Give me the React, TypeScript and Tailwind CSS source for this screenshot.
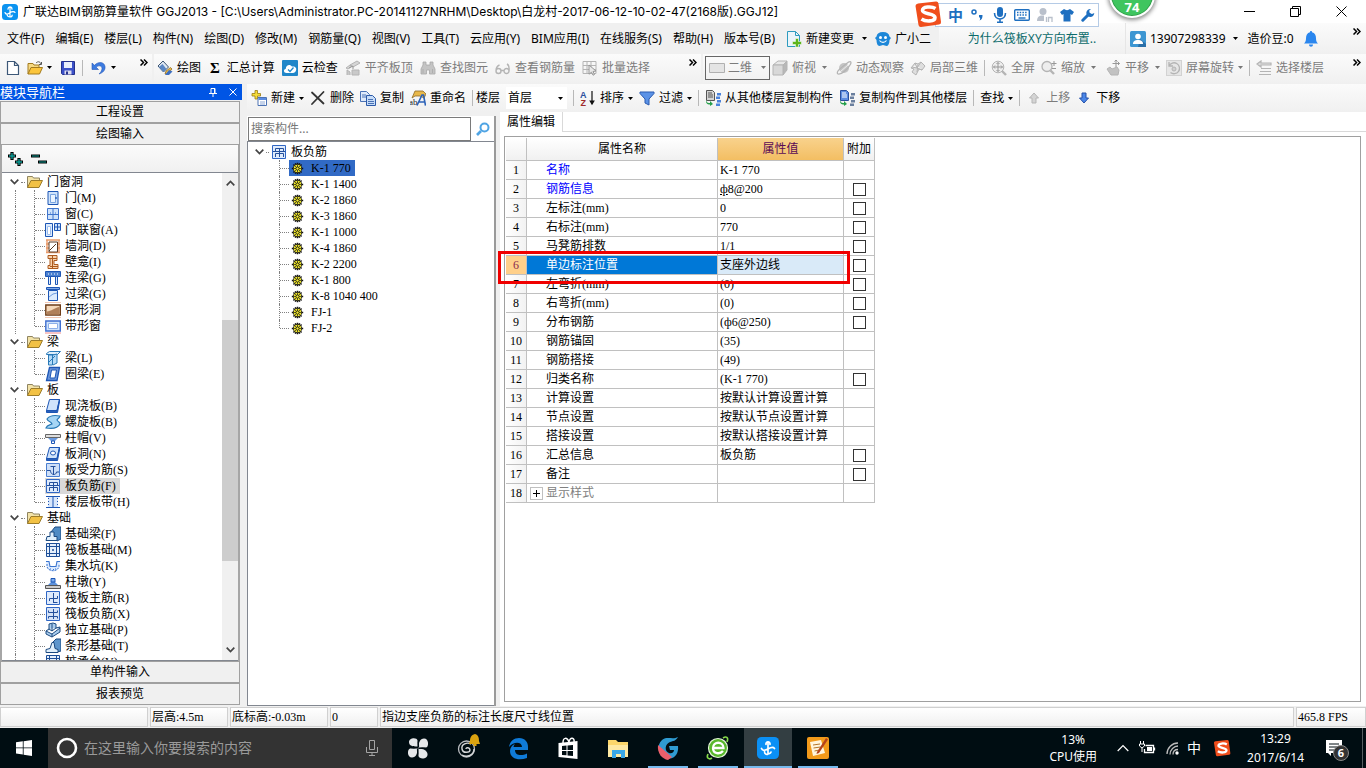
import React from "react";

type IconProps = { name: string; size?: number };

const B = "#1d56b5";
const L = "#cfe3fb";
const G = "#b4b4b4";
const D = "#979797";

const drawings: Record<string, React.ReactNode> = {
  app: (
    <>
      <rect width="16" height="16" rx="3.5" fill="#0b93f0" />
      <path d="M8 3v10M3 8.500c.5 2 3 2 5 .3s4.500-1.500 5-.3M5 10.500c.3 1.700 1.500 2.500 3 2.500s2.200-.8 2.200-2M6 5.200c0-3 4-3 4 0" fill="none" stroke="#fff" strokeWidth="1.200" strokeLinecap="round" />
    </>
  ),
  newFile: (
    <path d="M2.500 1.500h7l4 4v9h-11z M9.500 1.500v4h4" fill="#fff" stroke="#3d5878" strokeWidth="1.200" />
  ),
  open: (
    <>
      <path d="M1 14V3.500h5l1 1.500h5v3" fill="#f6d982" stroke="#a27a1e" />
      <path d="M1 14l3-6.500h11.500L12.500 14z" fill="#fbc53c" stroke="#a27a1e" />
      <path d="M9 3c2-2 4-1.500 5 1m.5-2v2.500H12" fill="none" stroke="#555" />
    </>
  ),
  save: (
    <>
      <path d="M1.500 1.500h13v13h-12l-1-1z" fill="#3b50c8" stroke="#24318c" />
      <path d="M4 2h8v6H4z" fill="#e9eefb" />
      <path d="M4.500 10.500h7v4h-7z" fill="#dde" />
      <path d="M6 11.500h2v3H6z" fill="#24318c" />
    </>
  ),
  undo: (
    <path d="M1 3v6.500h6.500L5.300 7.300C7.500 4.800 11 5.600 11 8.500c0 2-1.200 3.800-3 5.500 4-1.200 6.500-4 6-7.500C13.300 2 7.500 1 3.500 5.300z" fill="#3c7be0" stroke="#2557b8" strokeWidth=".6" />
  ),
  bucket: (
    <>
      <path d="M1 6l5-5 5.500 6-5 5z" fill="#dfe8f2" stroke="#3b5472" />
      <path d="M2 7l4.500 5 3-3-4-5z" fill="#5b87c4" />
      <path d="M8 14l1-3 4.500-3.500 1.500 1.500L11 13.500z" fill="#e5b64a" stroke="#8b6414" strokeWidth=".7" />
      <path d="M12 10l3.500 1.500L12 15H8z" fill="#3c6fc2" />
    </>
  ),
  cloud: (
    <>
      <rect width="16" height="16" rx="1" fill="#1f86c9" />
      <path d="M4.500 13C1.500 13 1 9.500 3.800 8.800 3.800 5 8 3.500 10 6.500c3-.6 5 1.500 4 4-.4 1.600-1.600 2.500-3 2.500z" fill="#fff" />
      <path d="M6 9.500l2 2 3.500-4" fill="none" stroke="#1f86c9" strokeWidth="1.300" />
    </>
  ),
  align: (
    <>
      <path d="M5 5l7-4 3 2-7 4zM1 8l4-3 2 1-4 3z" fill="#d6d6d6" stroke={G} />
      <path d="M2 15V10l3 2v3M7 15v-5h7v5z" fill="#c9c9c9" stroke={G} />
      <path d="M4 8l4-2v3" fill="none" stroke={D} />
    </>
  ),
  binoc: (
    <path d="M3 2h3v3h4V2h3v3l2 4v5H9.500v-4h-3v4H1V9l2-4z M3 9v4 M12.500 9v4" fill="#c4c4c4" stroke="#a8a8a8" strokeWidth=".8" />
  ),
  glasses: (
    <path d="M1 11a2.500 2.500 0 1 0 5 0a2.500 2.500 0 1 0-5 0c0-3 1-5 3.500-6M9 11a2.500 2.500 0 1 0 5 0a2.500 2.500 0 1 0-5 0M6 10.500h3M14 11c.5-4 0-6-2-7" fill="none" stroke={G} strokeWidth="1.400" />
  ),
  batch: (
    <>
      <path d="M1 1.500h13v12H1zM1 5.500h13M1 9.500h13M5 1.500v12M9 1.500v12" fill="none" stroke={G} />
      <path d="M7 5l7 6-3 .5 1.500 3-1.500.7-1.500-3-2.500 2z" fill="#e8e8e8" stroke={D} />
    </>
  ),
  rect: <path d="M.5 3.500h15v9H.5z" fill="#e4e4e4" stroke="#b0b0b0" />,
  cube: (
    <>
      <path d="M1 5l5-4h9l-4 4z" fill="#e8e8e8" stroke={G} />
      <path d="M11 5l4-4v9l-4 5z" fill="#b8b8b8" stroke={G} />
      <path d="M1 5h10v10H1z" fill="#d8d8d8" stroke={G} />
    </>
  ),
  orbit: (
    <>
      <circle cx="8" cy="8" r="5" fill="#c4c4c4" />
      <path d="M2 14C-1 12 6 7 10 4c5-4 6-2 4 1-2 4-9 10-12 9z" fill="none" stroke={G} strokeWidth="1.300" />
      <path d="M4 12l8-7" stroke="#eee" />
    </>
  ),
  local3d: (
    <path d="M1 8l4-5 3 1 3-2 4 4-3 4-3-1-3 6-4-3 2-3zM5 3l2 5 5 2M8 4l-1 8M2 7l5 1 4-6" fill="#dedede" stroke={G} />
  ),
  full: (
    <>
      <circle cx="7" cy="7" r="5.800" fill="#eee" stroke={G} />
      <path d="M7 2.500v9M2.500 7h9M5.500 4L7 2.500 8.500 4M5.500 10L7 11.500 8.500 10M4 5.500L2.500 7 4 8.500M10 5.500L11.500 7 10 8.500" fill="none" stroke={D} />
      <path d="M11 11l4 4" stroke={G} strokeWidth="2.400" />
    </>
  ),
  zoom: (
    <>
      <circle cx="6" cy="6.500" r="5" fill="#eee" stroke={G} strokeWidth="1.300" />
      <path d="M9.500 10.500L13 14" stroke={G} strokeWidth="2.400" />
      <path d="M13 1v5M10.500 3.500h5M11 8.500h4" stroke={D} />
    </>
  ),
  pan: (
    <>
      <path d="M2 9l3-2 2 2 5-2 2 3-1 5H6z" fill="#c2c2c2" stroke={G} />
      <path d="M11 0v7M7.500 3.500h7M9.500 1.500L11 0l1.500 1.500M13 2l1.500 1.500L13 5" fill="none" stroke={D} />
    </>
  ),
  rotate: (
    <>
      <rect x=".5" y=".5" width="15" height="15" fill="#e6e6e6" stroke="#d2d2d2" />
      <path d="M3 6A5.500 5.500 0 1 1 4.500 12.500M3 2v4h4" fill="none" stroke={G} strokeWidth="1.300" />
      <circle cx="8" cy="9" r="2" fill="#d0d0d0" stroke={G} />
    </>
  ),
  floors: (
    <path d="M1 4l4-3v2h10v2H5v2zM5 8.500h10M4 11.500h11M3 14.500h12" fill="#ddd" stroke={G} strokeWidth="1.200" />
  ),
  create: (
    <>
      <path d="M4 .5h2.500v3h3V6h-3v3H4V6H1V3.500h3z" fill="#f5dc3a" stroke="#9a7b10" strokeWidth=".8" />
      <path d="M7 7.500h8.500v8H7z" fill="#fff" stroke="#4c73b4" />
      <path d="M7.500 8h7.500v2H7.500z" fill="#5b8be0" />
      <path d="M9 12h5M9 14h5" stroke="#8ba6d4" />
    </>
  ),
  cross: (
    <path d="M2 2.500l11.500 11M13.500 2L2 14" stroke="#333" strokeWidth="1.800" strokeLinecap="round" />
  ),
  copy: (
    <>
      <path d="M.5 1.500h6l3 3v7h-9z" fill="#dfeafa" stroke="#4a72b5" />
      <path d="M6.500 5.500h6l3 3v7h-9z" fill="#c6dcf8" stroke="#2c5aa8" />
      <path d="M2 5h4M2 7h4M8 9.500h5M8 11.500h6M8 13.500h6" stroke="#4a72b5" />
    </>
  ),
  rename: (
    <>
      <path d="M5 1h8l3 3-2 4-4-2H5L2 8z" fill="#e8b84a" stroke="#8d6a28" strokeWidth=".8" />
      <text x="-1" y="15" fontSize="9" fontFamily="Liberation Serif" fill="#222">ab</text>
      <path d="M7 15.500L12 5h1.500l2 10.500M9 12h6" fill="none" stroke="#2c62b8" strokeWidth="1.600" />
    </>
  ),
  az: (
    <>
      <text x="0" y="7.500" fontSize="9" fontWeight="700" fontFamily="Liberation Sans" fill="#2b4f9e">A</text>
      <text x="0.500" y="15.500" fontSize="9" fontWeight="700" fontFamily="Liberation Sans" fill="#a02a2a">Z</text>
      <path d="M12 1v12M10.200 11L12 14l1.800-3z" fill="#111" stroke="#111" strokeWidth="1.200" />
    </>
  ),
  filter: (
    <path d="M1 2h14v1.500L10 9v6l-4-2V9L1 3.500z" fill="#5b92e6" stroke="#2a5bb0" />
  ),
  copyFrom: (
    <>
      <path d="M1.500.500h6l2 2v8h-8z" fill="#d4d4d4" stroke="#555" />
      <path d="M3 3h4M3 5h5M3 7h5" stroke="#555" />
      <path d="M1 10c1 3 2 3 4 3v-2l3 3-3 2v-1.500c-3 0-4-1-4-4.500z" fill="#24a04a" />
      <path d="M12 3h4v2.500h-4zM11 6.500h4V9h-4zM12 10h4v2.500h-4zM11 13.500h4V16h-4z" fill="#4b83dc" />
    </>
  ),
  copyTo: (
    <>
      <path d="M1.500.500h6l2 2v8h-8z" fill="#5d8ce0" stroke="#2a4f9c" />
      <path d="M3 3h4M3 5h5M3 7h5" stroke="#fff" />
      <path d="M1 10c1 3 2 3 4 3v-2l3 3-3 2v-1.500c-3 0-4-1-4-4.500z" fill="#24a04a" />
      <path d="M12 3h4v2.500h-4zM11 6.500h4V9h-4zM12 10h4v2.500h-4zM11 13.500h4V16h-4z" fill="#6a7f9e" />
    </>
  ),
  up: <path d="M8 3l4.500 5H10v5H6V8H3.500z" fill="#d4d4d4" stroke="#b5b5b5" />,
  down: <path d="M8 13l4.500-5H10V3H6v5H3.500z" fill="#4a86e8" stroke="#2450a8" />,
  changeDoc: (
    <>
      <path d="M1.500.500h8l4 4v11h-12z" fill="#eaf5fb" stroke="#2d9bbf" />
      <path d="M9.500.500v4h4" fill="none" stroke="#2d9bbf" />
      <path d="M9.500 7.500h3v3h3v3h-3v2.500h-3v-2.500h-3v-3h3z" fill="#5cb51c" stroke="#fff" strokeWidth=".5" />
    </>
  ),
  mascot: (
    <>
      <path d="M8 1c4 0 6 1.500 6.500 4.500L16 7l-1.500 2c0 4-1.500 6-3 6L8 14l-3.500 1c-2 0-3-3-3-6L0 7l1.500-1.500C2 2.500 4 1 8 1z" fill="#1d87d8" />
      <circle cx="5.500" cy="6.500" r="1.500" fill="#fff" />
      <circle cx="10.500" cy="6.500" r="1.500" fill="#fff" />
      <path d="M4.500 9.500c2 2.500 5 2.500 7 0" fill="none" stroke="#fff" strokeWidth="1.200" />
    </>
  ),
  user: (
    <>
      <rect width="16" height="16" rx="1.500" fill="#3d96d2" />
      <path d="M10 8l6 5v3H8z" fill="#2a6fa8" />
      <circle cx="8" cy="5.500" r="2.800" fill="#fff" />
      <path d="M3 13c0-3 2-4 5-4s5 1 5 4z" fill="#fff" />
    </>
  ),
  bell: (
    <path d="M8 0c.8 0 1 .5 1 1.200 3 .8 4 3 4 6 0 2.500.5 4 2 5.300H1c1.500-1.300 2-2.800 2-5.300 0-3 1-5.200 4-6C7 .500 7.200 0 8 0zM6 13.500h4c0 3-4 3-4 0z" fill="#2a86ee" />
  ),
  folder: (
    <>
      <path d="M.5 13.500v-11h5l1 1.500h6v3" fill="#f3e3a8" stroke="#8f8460" />
      <path d="M.5 13.500L4 6.500h11.500l-3.500 7z" fill="#f2c144" stroke="#9c7c2a" />
    </>
  ),
  search: (
    <>
      <circle cx="9.500" cy="6.500" r="4" fill="none" stroke="#4fa4e4" strokeWidth="2" />
      <path d="M6 10l-4 4" stroke="#4fa4e4" strokeWidth="2.600" />
    </>
  ),
  gear: (
    <>
      <path d="M8 1v14M1 8h14M3 3l10 10M13 3L3 13M5.300 1.500l5.400 13M10.700 1.500l-5.400 13" stroke="#111" strokeWidth="1.800" />
      <circle cx="8" cy="8" r="5.200" fill="#f5ec2a" stroke="#111" strokeWidth="1" />
      <path d="M8 3v10M3 8h10M4.500 4.500l7 7M11.500 4.500l-7 7" stroke="#222" strokeWidth=".9" />
      <circle cx="8" cy="8" r="2" fill="#f5ec2a" stroke="#111" />
    </>
  ),
  door: (
    <>
      <path d="M3 1.500h10v13H3z" fill={L} stroke={B} />
      <path d="M5.500 4.500h5v8h-5z" fill="#e9f3ff" stroke="#7aa5e0" />
      <path d="M11 7v2" stroke={B} strokeWidth="1.300" />
    </>
  ),
  window: (
    <path d="M2.500 2.500h11v11h-11zM8 2.500v11M2.500 8.500h11M5 7h1M10 7h1" fill={L} stroke="#3f74cc" />
  ),
  doorWindow: (
    <>
      <path d="M.5 1.500h7v13h-7z" fill="#dcebfd" stroke={B} />
      <path d="M2.500 4.500h3v8h-3z" fill="#fff" stroke="#9bbcec" />
      <path d="M9.500 1.500h6v7h-6zM12.500 1.500v7M9.500 5h6" fill={L} stroke={B} />
    </>
  ),
  wallHole: (
    <>
      <path d="M1 2h14M1 6h14M1 10h14M1 14.500h14M2 2v12M14 2v12" stroke="#e89a6a" strokeWidth="1.400" />
      <path d="M4 4h8.500v10H4z" fill="#fff" stroke="#5b3a24" />
      <path d="M4 13l7-7" stroke="#5b3a24" />
    </>
  ),
  niche: (
    <path d="M3 1.500h9v5h-3v4h4v4H3v-3h2v-7H3zM5 4.500h7M5 12.500h8M7.500 2v12" fill="#f8d2ac" stroke="#ad5a1e" />
  ),
  linkBeam: (
    <>
      <path d="M.5 1.500h15v5H.5z" fill="#4a80d0" stroke={B} />
      <path d="M3 4h1M6 4h1M9 4h1M12 4h1" stroke="#fff" />
      <path d="M3.500 6.500h2v8h-2zM10.500 6.500h2v8h-2z" fill="#e2eefd" stroke={B} />
    </>
  ),
  lintel: (
    <>
      <path d="M1.500 1.500h13v2h-13z" fill="#7ea8e6" stroke={B} />
      <path d="M3.500 4.500h9v10h-9z" fill="#dcebfd" stroke={B} />
      <path d="M4 11l4-3 4-1" fill="none" stroke="#6d9be0" />
    </>
  ),
  stripHole: (
    <>
      <path d="M.8 3h14.500v10H.8z" fill="#f5d9bb" stroke="#6e3d18" strokeWidth="1.400" />
      <path d="M1.500 9.500c5 0 8-4 13-4.500v7.500h-13z" fill="#b0805a" />
      <path d="M0 .500h16M0 15.500h16" stroke="#f3c8b4" />
    </>
  ),
  stripWindow: (
    <>
      <path d="M.8 3h14.500v10H.8z" fill={L} stroke="#3f6fd0" strokeWidth="1.400" />
      <path d="M3.500 5.500h9v5h-9z" fill="#fff" stroke="#8db0ea" />
      <path d="M0 15h16" stroke="#f08a8a" />
    </>
  ),
  beam: (
    <>
      <path d="M1.500 3.500l3-2h11l-3 3h-11z" fill="#dff0fd" stroke="#2a7ab8" />
      <path d="M3.500 5h4v10h-4zM8 5l4-1v9l-4 2" fill="#b4dbf8" stroke="#2a7ab8" />
      <path d="M4 12l6-6" stroke="#2a7ab8" />
    </>
  ),
  ringBeam: (
    <>
      <path d="M4.500 1.500h10l-2.500 13H1.500z" fill="#6c97dc" stroke={B} strokeWidth="1.300" />
      <path d="M6.500 4h5l-1.500 8H5z" fill="#fff" stroke={B} />
    </>
  ),
  slab: (
    <>
      <path d="M4.500 1.500h10l-2.500 11H1.500z" fill={L} stroke={B} />
      <path d="M1.500 12.500h10.500l2.500-11v2l-2 11H1.500z" fill="#2a60b8" stroke={B} />
    </>
  ),
  spiral: (
    <path d="M2 5c3-4 8-4 13-3-1 3-3 3-3 4 2 3 3 2 3 4-2 4-8 5-14 4 1-3 4-3 6-4-1-3-4-2-5-5z" fill="#a6d6f5" stroke="#2778b5" strokeWidth="1.200" />
  ),
  cap: (
    <>
      <path d="M.5 4.500h15v3H.5z" fill="#ddd" stroke="#666" />
      <path d="M3 8h10l-3 3H6z" fill="#6c9be0" />
      <path d="M6.500 11h3v2.500h-3z" fill="#fff" stroke={B} />
    </>
  ),
  slabHole: (
    <>
      <path d="M4.500 1.500h10l-2.500 11H1.500z" fill={L} stroke={B} />
      <path d="M1.500 12.500h10.500l2.500-11v2l-2 11H1.500z" fill="#2a60b8" stroke={B} />
      <ellipse cx="8" cy="7" rx="2.500" ry="2" fill="#fff" stroke={B} />
    </>
  ),
  stress: (
    <>
      <path d="M1.500 1.500h13v13h-13z" fill="#cfe0f8" stroke="#4a7ed0" />
      <path d="M8.500 4v9M5.500 4.500h5M2 8.500h3.500c0 5 6 5 6 1.500H14" fill="none" stroke="#24509c" />
    </>
  ),
  negative: (
    <>
      <path d="M1.500 1.500h13v13h-13z" fill="#dfebfc" stroke="#2f66c4" />
      <path d="M4.500 7V4.500h8V7M4.500 13V9.500h8V13M8.500 4v9M2 7.500h12" fill="none" stroke="#24509c" />
    </>
  ),
  band: (
    <>
      <path d="M3 3h10v10H3z" fill="#d8e6fb" />
      <path d="M1 2.500h14M1 13.500h14M8 3v10" stroke={B} />
      <path d="M3.500 4v8M12.500 4v8" stroke={B} strokeDasharray="1 2" />
    </>
  ),
  footBeam: (
    <>
      <path d="M6 6l4-5h6v12l-4 2z" fill="#4f8bc4" stroke="#1c4a80" />
      <path d="M1 14.500l1-4h3V6l4 0v4.500h3v4z" fill="#e1f0fc" stroke="#1c4a80" />
    </>
  ),
  raft: (
    <path d="M1.500 1.500h13v13h-13zM4.500 1v14M11.500 1v14M1 4.500h14M1 11.500h14M7.500 7.500h1v1h-1z" fill="#e6f0fc" stroke="#1e4f98" />
  ),
  pit: (
    <>
      <path d="M1 3h3l1 6h6l1-6h3l-1 7c-2 4-10 4-12 0z" fill="#dcebff" />
      <path d="M1 3.500h3l1 5h6l1-5h3" fill="none" stroke="#3a74cf" strokeWidth="1.100" />
      <path d="M2 6v3c2 5 10 5 12 0V6M5 11h1M8 11.500h1M10 11h1" fill="none" stroke="#3a74cf" strokeDasharray="2 1" />
    </>
  ),
  pier: (
    <>
      <path d="M.5 11.500h15v3H.5z" fill="#ccc" stroke="#555" />
      <path d="M3 11l3-3h4l3 3z" fill="#5d92dc" />
      <path d="M6 4.500h4V8H6z" fill="#7cadf0" stroke={B} />
    </>
  ),
  raftMain: (
    <>
      <path d="M1.500 1.500h13v13h-13z" fill="#dfebfc" stroke="#2f66c4" />
      <path d="M8.500 3v10M4.500 11V8.500h8V6M8.500 12.500h4" fill="none" stroke="#24509c" />
    </>
  ),
  raftNeg: (
    <>
      <path d="M1.500 1.500h13v13h-13z" fill="#d5e3f8" stroke="#2f66c4" />
      <path d="M3.500 4.500v2h9v-2M3.500 12.500v-2h9v2M8.500 3v10" fill="none" stroke="#24509c" />
    </>
  ),
  isolated: (
    <path d="M1 9l3-2V2l4-1 3 1v4l4-1v5l-8 5-6-3zM1 9l6 3 8-6M7 12v3M4 7l3 2 4-3M7 9V2" fill="#a9cdee" stroke="#1c4a80" />
  ),
  strip: (
    <>
      <path d="M7 5l4-4h5v12l-4 1z" fill="#5d95cc" stroke="#1c4a80" />
      <path d="M1 14.500v-3l4-1 2-6h2l1 6 3 1v3z" fill="#e1f0fc" stroke="#1c4a80" />
    </>
  ),
};

function Icon({ name, size = 16 }: IconProps) {
  return (
    <svg width={size} height={size} viewBox="0 0 16 16" className="shrink-0" aria-hidden="true">
      {drawings[name]}
    </svg>
  );
}

function Caret({ dim }: { dim?: boolean }) {
  return (
    <svg width="5" height="3" viewBox="0 0 5 3" className="shrink-0" aria-hidden="true">
      <path d="M0 0h5L2.500 3z" fill={dim ? "#777" : "#000"} />
    </svg>
  );
}

function More() {
  return (
    <button aria-label="更多" className="flex">
      <svg width="8" height="7" viewBox="0 0 8 7" aria-hidden="true">
        <path d="M.5.500l3 3-3 3M4 .500l3 3-3 3" fill="none" stroke="#000" strokeWidth="1.500" />
      </svg>
    </button>
  );
}

function Sep() {
  return <span className="h-4 w-px shrink-0 bg-[#b8b8b8]" />;
}

type ToolProps = { icon?: string; label?: string; dim?: boolean; caret?: boolean; name?: string };

function Tool({ icon, label, dim, caret, name }: ToolProps) {
  return (
    <button
      aria-label={label ? undefined : name}
      className={`flex shrink-0 items-center gap-1 whitespace-nowrap ${dim ? "text-[#7c7c7c]" : "text-black"}`}
    >
      {icon && <Icon name={icon} />}
      {label && <span>{label}</span>}
      {caret && <Caret dim={dim} />}
    </button>
  );
}

const bar = "flex items-center bg-linear-to-b from-[#fbfbfb] to-[#f0f0f0]";
const song = "font-['Liberation_Serif','Noto_Sans_CJK_SC',serif]";

function TitleBar() {
  return (
    <header className="relative flex h-[23px] shrink-0 items-center bg-white pl-[2px]">
      <Icon name="app" />
      <h1 className="ml-[5px] font-['Inter','Noto_Sans_CJK_SC',sans-serif] whitespace-nowrap">
        广联达BIM钢筋算量软件 GGJ2013 - [C:\Users\Administrator.PC-20141127NRHM\Desktop\白龙村-2017-06-12-10-02-47(2168版).GGJ12]
      </h1>
      <div className="ml-auto flex items-center gap-[35px] pr-[19px]">
        <button aria-label="最小化">
          <svg width="11" height="11" viewBox="0 0 11 11"><path d="M0 5.500h11" stroke="#000" /></svg>
        </button>
        <button aria-label="还原">
          <svg width="11" height="11" viewBox="0 0 11 11"><path d="M.5 2.500h8v8h-8zM2.500 2.500v-2h8v8h-2" fill="none" stroke="#000" /></svg>
        </button>
        <button aria-label="关闭">
          <svg width="11" height="11" viewBox="0 0 11 11"><path d="M.5.500l10 10M10.500.500l-10 10" stroke="#000" /></svg>
        </button>
      </div>
      <InputMethodBar />
      <div className="absolute -top-7 right-[211px] z-20 flex size-[46px] items-end justify-center rounded-full border-2 border-white bg-[#3fc55f] pb-[3px] text-[13px] leading-3 font-bold text-white shadow-[0_1px_4px_1px_#8a8a8a] ring-1 ring-[#2f9b48] ring-inset">
        74
      </div>
    </header>
  );
}

function SogouMark({ size }: { size: number }) {
  return (
    <svg width={size} height={size} viewBox="0 0 28 28" aria-hidden="true">
      <path d="M4 3.500L22 1.500q2-.2 2.500 2L27 22q.3 2-2 2.500L7 27q-2 .2-2.500-2L1.500 6Q1.300 4 4 3.500z" fill="#f04e1c" />
      <path d="M21.500 8.500c-4-2.500-13-2-13 2 0 3.800 12.500 2.500 12.500 7 0 4.300-9.500 4.300-13.500 1.500" fill="none" stroke="#fff" strokeWidth="3.600" />
    </svg>
  );
}

function InputMethodBar() {
  return (
    <div className="absolute top-[3px] right-[267px] z-10 flex h-[24px] w-[164px] items-center gap-[7px] border border-[#b5cbe6] bg-white pl-[12px] text-[#1e6fc0]">
      <span className="absolute -top-[4px] -left-[22px]"><SogouMark size={28} /></span>
      <span className="text-[15px] leading-5 font-bold">中</span>
      <svg width="16" height="16" viewBox="0 0 16 16"><circle cx="4" cy="5" r="2" fill="none" stroke="#1e6fc0" strokeWidth="1.500" /><path d="M9 8h3.500c0 3-.5 4.500-3 5.500 1-1.500 1-2.500-.5-3.500z" fill="#1e6fc0" /></svg>
      <svg width="14" height="16" viewBox="0 0 14 16"><rect x="4" y="0" width="6" height="10" rx="3" fill="#1e6fc0" /><path d="M1.500 6c0 8 11 8 11 0M7 12v3M4 15.200h6" fill="none" stroke="#1e6fc0" strokeWidth="1.600" /></svg>
      <svg width="16" height="14" viewBox="0 0 16 14"><rect x=".7" y="1.700" width="14.600" height="10.600" rx="1" fill="none" stroke="#1e6fc0" strokeWidth="1.400" /><path d="M3 4.500h10M3 7h10" stroke="#1e6fc0" strokeWidth="1.500" strokeDasharray="1.500 1.200" /><path d="M4.500 10h7" stroke="#1e6fc0" strokeWidth="1.400" /></svg>
      <svg width="16" height="16" viewBox="0 0 16 16"><circle cx="6" cy="4.500" r="3.500" fill="#b9c0cb" /><path d="M0 14c0-5 3-6 7-5.500V14z" fill="#b9c0cb" /><path d="M9.500 10v5M9 11h1M11.500 15v-4.500h3.500V15" fill="none" stroke="#b9c0cb" strokeWidth="1.300" /></svg>
      <svg width="14" height="14" viewBox="0 0 14 14"><path d="M4 1c1.500 1.500 4.500 1.500 6 0l4 3-2 3-1.500-1v7.500h-7V6L2 7 0 4z" fill="#1e6fc0" /></svg>
      <svg width="14" height="14" viewBox="0 0 14 14"><path d="M1.800 12.200L8 6" stroke="#1e6fc0" strokeWidth="3" strokeLinecap="round" /><path d="M10 1a4 4 0 1 0 3.300 4L11 6 8.500 5 8.300 2.500z" fill="#1e6fc0" /></svg>
    </div>
  );
}

const menus = ["文件(F)", "编辑(E)", "楼层(L)", "构件(N)", "绘图(D)", "修改(M)", "钢筋量(Q)", "视图(V)", "工具(T)", "云应用(Y)", "BIM应用(I)", "在线服务(S)", "帮助(H)", "版本号(B)"];

function MenuBar() {
  return (
    <nav className="flex h-[31px] shrink-0 items-center bg-[#f0f0f0] pl-[7px]">
      <div className="flex gap-[11px]">
        {menus.map((m) => (
          <button key={m} className="whitespace-nowrap">{m}</button>
        ))}
      </div>
      <div className="ml-[11px] flex items-center gap-1">
        <Icon name="changeDoc" />
        <button className="flex items-center gap-2 whitespace-nowrap">新建变更<Caret /></button>
        <span className="ml-1 flex"><Icon name="mascot" /></span>
        <button className="whitespace-nowrap">广小二</button>
      </div>
      <div className={`${bar} ml-auto h-full w-[186px] shrink-0 justify-center`}>
        <a href="#help" className="whitespace-nowrap text-[#0b6b6b]">为什么筏板XY方向布置..</a>
      </div>
      <div className={`${bar} h-full w-[241px] shrink-0 gap-1 border-l border-[#e6e6e6] pl-[4px]`}>
        <Icon name="user" />
        <button className="flex items-center gap-[7px]">13907298339<Caret /></button>
        <span className="ml-[6px]">造价豆:0</span>
        <button aria-label="通知" className="ml-[5px]"><Icon name="bell" /></button>
        <span className="mt-[5px] mr-[5px] ml-auto self-start"><More /></span>
      </div>
    </nav>
  );
}

function MainToolbar() {
  return (
    <div className="flex h-[30px] shrink-0 bg-[#f0f0f0]">
      <div className={`${bar} w-[152px] shrink-0 gap-[6px] pb-[3px] pl-[5px]`}>
        <Tool icon="newFile" name="新建" />
        <Tool icon="open" name="打开" caret />
        <span className="ml-[2px] flex"><Tool icon="save" name="保存" /></span>
        <Sep />
        <span className="ml-[2px] flex"><Tool icon="undo" name="撤销" caret /></span>
        <span className="mt-[5px] ml-auto self-start pr-1"><More /></span>
      </div>
      <div className={`${bar} ml-[2px] w-[547px] shrink-0 gap-[7px] pb-[3px] pl-[3px]`}>
        <Tool icon="bucket" label="绘图" />
        <button className="ml-[2px] flex items-center gap-[7px]">
          <span className="font-['Liberation_Serif',serif] text-[15px] font-bold">Σ</span>汇总计算
        </button>
        <Tool icon="cloud" label="云检查" />
        <Tool icon="align" label="平齐板顶" dim />
        <Tool icon="binoc" label="查找图元" dim />
        <Tool icon="glasses" label="查看钢筋量" dim />
        <Tool icon="batch" label="批量选择" dim />
        <span className="mt-[5px] ml-auto self-start pr-1"><More /></span>
      </div>
      <div className={`${bar} ml-[2px] min-w-0 grow gap-[6px] pb-[3px] pl-[2px]`}>
        <label className="-mr-[4px] flex h-6 shrink-0 items-center gap-[3px] border border-[#666] px-[3px] text-[#7c7c7c]">
          <Icon name="rect" />
          <select aria-label="视图模式" className="w-[30px] appearance-none bg-transparent"><option>二维</option></select>
          <Caret dim />
        </label>
        <Tool icon="cube" label="俯视" dim />
        <span className="flex pr-[3px]"><Caret dim /></span>
        <Tool icon="orbit" label="动态观察" dim />
        <Tool icon="local3d" label="局部三维" dim />
        <Sep />
        <Tool icon="full" label="全屏" dim />
        <Tool icon="zoom" label="缩放" dim />
        <span className="flex pr-[3px]"><Caret dim /></span>
        <Tool icon="pan" label="平移" dim />
        <Caret dim />
        <Tool icon="rotate" label="屏幕旋转" caret dim />
        <Sep />
        <Tool icon="floors" label="选择楼层" dim />
        <span className="mt-[5px] mr-[5px] ml-auto self-start"><More /></span>
      </div>
    </div>
  );
}

function ComponentToolbar() {
  return (
    <div className={`${bar} h-7 shrink-0 gap-[6px] pl-1`}>
      <Tool icon="create" label="新建" caret />
      <Tool icon="cross" label="删除" />
      <Tool icon="copy" label="复制" />
      <Tool icon="rename" label="重命名" />
      <Sep />
      <label className="-ml-[3px] flex items-center gap-[6px] whitespace-nowrap">
        楼层
        <span className="relative flex items-center">
          <select className="h-[22px] w-[61px] appearance-none bg-white pl-[2px]"><option>首层</option></select>
          <span className="pointer-events-none absolute right-[4px]"><Caret /></span>
        </span>
      </label>
      <Sep />
      <Tool icon="az" label="排序" caret />
      <Tool icon="filter" label="过滤" caret />
      <Sep />
      <Tool icon="copyFrom" label="从其他楼层复制构件" />
      <Tool icon="copyTo" label="复制构件到其他楼层" />
      <Sep />
      <Tool label="查找" caret />
      <Sep />
      <Tool icon="up" label="上移" dim />
      <Tool icon="down" label="下移" />
    </div>
  );
}

type Leaf = [string, string];
const tree: { title: string; items: Leaf[] }[] = [
  { title: "门窗洞", items: [["door", "门(M)"], ["window", "窗(C)"], ["doorWindow", "门联窗(A)"], ["wallHole", "墙洞(D)"], ["niche", "壁龛(I)"], ["linkBeam", "连梁(G)"], ["lintel", "过梁(G)"], ["stripHole", "带形洞"], ["stripWindow", "带形窗"]] },
  { title: "梁", items: [["beam", "梁(L)"], ["ringBeam", "圈梁(E)"]] },
  { title: "板", items: [["slab", "现浇板(B)"], ["spiral", "螺旋板(B)"], ["cap", "柱帽(V)"], ["slabHole", "板洞(N)"], ["stress", "板受力筋(S)"], ["negative", "板负筋(F)"], ["band", "楼层板带(H)"]] },
  { title: "基础", items: [["footBeam", "基础梁(F)"], ["raft", "筏板基础(M)"], ["pit", "集水坑(K)"], ["pier", "柱墩(Y)"], ["raftMain", "筏板主筋(R)"], ["raftNeg", "筏板负筋(X)"], ["isolated", "独立基础(P)"], ["strip", "条形基础(T)"], ["raft", "桩承台(V)"]] },
];

function Chevron({ dir }: { dir: "up" | "down" }) {
  return (
    <svg width="9" height="6" viewBox="0 0 9 6" className="shrink-0" aria-hidden="true">
      <path d={dir === "down" ? "M.7.700l3.800 3.800L8.300.700" : "M.7 5.300l3.800-3.800 3.800 3.800"} fill="none" stroke="#444" strokeWidth="1.700" />
    </svg>
  );
}

function NavTree() {
  return (
    <ul className="min-w-0 grow overflow-hidden pt-px">
      {tree.map((g) => (
        <li key={g.title}>
          <button className="flex h-4 items-center pl-[8px] whitespace-nowrap">
            <Chevron dir="down" />
            <span className="mx-[2px] w-[4px] border-t border-dotted border-[#808080]" />
            <Icon name="folder" />
            <span className="ml-[4px]">{g.title}</span>
          </button>
          <ul>
            {g.items.map(([icon, label], i) => (
              <li key={label} className="flex h-4 items-center pl-[13px]">
                <span className="h-4 w-[19px] shrink-0 border-l border-dotted border-[#808080]" />
                <span className={`w-px shrink-0 self-start border-l border-dotted border-[#808080] ${i === g.items.length - 1 ? "h-2" : "h-4"}`} />
                <span className="w-[10px] shrink-0 border-t border-dotted border-[#808080]" />
                <button className={`flex h-4 items-center gap-1 pr-[4px] whitespace-nowrap ${label === "板负筋(F)" ? "bg-[#d9d9d9]" : ""}`}>
                  <Icon name={icon} />
                  <span>{label}</span>
                </button>
              </li>
            ))}
          </ul>
        </li>
      ))}
    </ul>
  );
}

const navButton = "mr-[2px] h-[22px] shrink-0 border border-[#a0a0a0] bg-[#f0f0f0] text-center";

function Sidebar() {
  return (
    <aside className={`flex w-[242px] shrink-0 flex-col bg-[#f0f0f0] ${song}`}>
      <div className="mb-px flex h-4 shrink-0 items-center bg-[#0055e5] pr-[5px] font-['Noto_Sans','Noto_Sans_CJK_SC',sans-serif] text-[13px] leading-4 text-white">
        <h2>模块导航栏</h2>
        <button aria-label="固定" className="ml-auto">
          <svg width="8" height="9" viewBox="0 0 8 9"><path d="M2 .500h4v5H2zM5.500.500v5M0 5.500h8M4 5.500v3.500" fill="none" stroke="#fff" /></svg>
        </button>
        <button aria-label="关闭面板" className="ml-3">
          <svg width="8" height="8" viewBox="0 0 8 8"><path d="M.5.500l7 7M7.500.500l-7 7" stroke="#fff" /></svg>
        </button>
      </div>
      <button className={navButton}>工程设置</button>
      <button className={navButton}>绘图输入</button>
      <div className="mr-[2px] flex min-h-0 grow flex-col border-x-2 border-[#a6a6a6]">
        <div className={`${bar} h-[27px] shrink-0 gap-2 pl-[5px]`}>
          <button aria-label="全部展开">
            <svg width="16" height="16" viewBox="0 0 16 16"><path d="M5 1v8M1 5h8M12 7v8M8 11h8" stroke="#000" strokeWidth="3.200" /><path d="M5 2v6M2 5h6M12 8v6M9 11h6" stroke="#0c9b94" strokeWidth="1.400" /></svg>
          </button>
          <button aria-label="全部折叠">
            <svg width="16" height="16" viewBox="0 0 16 16"><path d="M0 5h9M7 11h9" stroke="#000" strokeWidth="3.200" /><path d="M1 5h7M8 11h7" stroke="#0c9b94" strokeWidth="1.200" /></svg>
          </button>
        </div>
        <div className="flex min-h-0 grow border-y border-[#828790] bg-white">
          <NavTree />
          <div className="flex w-4 shrink-0 flex-col items-center bg-[#f0f0f0] py-[7px]">
            <Chevron dir="up" />
            <div className="mt-[134px] h-[241px] w-full bg-[#cdcdcd]" />
            <span className="mt-auto"><Chevron dir="down" /></span>
          </div>
        </div>
      </div>
      <button className={navButton}>单构件输入</button>
      <button className={`${navButton} mb-px`}>报表预览</button>
    </aside>
  );
}

const components = ["K-1 770", "K-1 1400", "K-2 1860", "K-3 1860", "K-1 1000", "K-4 1860", "K-2 2200", "K-1 800", "K-8 1040 400", "FJ-1", "FJ-2"];

function ComponentList() {
  return (
    <section className={`mt-1 flex w-[249px] shrink-0 flex-col border-r-2 border-[#9a9a9a] bg-white ${song}`}>
      <div className="flex h-[25px] shrink-0 items-center">
        <input aria-label="搜索构件" placeholder="搜索构件..." className="ml-px h-6 w-[223px] border border-[#7a7a7a] px-[2px] font-['Noto_Sans','Noto_Sans_CJK_SC',sans-serif] placeholder:text-[#777]" />
        <button aria-label="搜索" className="mx-auto"><Icon name="search" /></button>
      </div>
      <ul className="grow border-t border-b border-l border-[#828790] bg-white pt-[2px]">
        <li>
          <button className="flex h-4 items-center pl-[7px]">
            <Chevron dir="down" />
            <span className="mx-[2px] w-[3px] border-t border-dotted border-[#808080]" />
            <Icon name="negative" />
            <span className="ml-[4px]">板负筋</span>
          </button>
          <ul>
            {components.map((c, i) => (
              <li key={c} className="flex h-4 items-center pl-[31px]">
                <span className={`w-px shrink-0 self-start border-l border-dotted border-[#808080] ${i === components.length - 1 ? "h-2" : "h-4"}`} />
                <span className="w-[9px] shrink-0 border-t border-dotted border-[#808080]" />
                <button className={`flex h-4 items-center pr-1 pl-[2px] whitespace-nowrap ${i === 0 ? "bg-[#316ac5]" : ""}`}>
                  <Icon name="gear" size={13} />
                  <span className="ml-[7px]">{c}</span>
                </button>
              </li>
            ))}
          </ul>
        </li>
      </ul>
    </section>
  );
}

type Row = { name: string; value: React.ReactNode; check?: boolean; tone?: string };
const rows: Row[] = [
  { name: "名称", value: "K-1 770", tone: "text-[#0000ff]" },
  { name: "钢筋信息", value: <><span className="underline">ф</span>8@200</>, check: true, tone: "text-[#0000ff]" },
  { name: "左标注(mm)", value: "0", check: true },
  { name: "右标注(mm)", value: "770", check: true },
  { name: "马凳筋排数", value: "1/1", check: true },
  { name: "单边标注位置", value: "支座外边线", check: true, tone: "text-white" },
  { name: "左弯折(mm)", value: "(0)", check: true },
  { name: "右弯折(mm)", value: "(0)", check: true },
  { name: "分布钢筋", value: "(ф6@250)", check: true },
  { name: "钢筋锚固", value: "(35)" },
  { name: "钢筋搭接", value: "(49)" },
  { name: "归类名称", value: "(K-1 770)", check: true },
  { name: "计算设置", value: "按默认计算设置计算" },
  { name: "节点设置", value: "按默认节点设置计算" },
  { name: "搭接设置", value: "按默认搭接设置计算" },
  { name: "汇总信息", value: "板负筋", check: true },
  { name: "备注", value: "", check: true },
  { name: "显示样式", value: "", tone: "text-[#808080]" },
];

const cell = "border-r border-b border-[#c0c0c0] p-0 font-normal";

function PropertyTable() {
  return (
    <table className="w-[369px] table-fixed border-separate border-spacing-0 leading-4">
      <colgroup>
        <col className="w-[21px]" />
        <col className="w-[191px]" />
        <col className="w-[126px]" />
        <col className="w-[31px]" />
      </colgroup>
      <thead>
        <tr className="h-[23px] bg-linear-to-b from-white to-[#f0f0f0]">
          <th className={cell} aria-label="序号" />
          <th className={cell}>属性名称</th>
          <th className={`${cell} bg-linear-to-b from-[#f8d28c] to-[#f3be62] text-[#5a0a55]`}>属性值</th>
          <th className={cell}>附加</th>
        </tr>
      </thead>
      <tbody>
        {rows.map((r, i) => {
          const active = i === 5;
          return (
            <tr key={r.name} className="h-[19px]">
              <th scope="row" className={`${cell} ${active ? "bg-[#ffd08a] text-[#8a2a50]" : "bg-linear-to-r from-white to-[#f2f2f2]"}`}>{i + 1}</th>
              <td className={`${cell} ${r.tone ?? ""} ${active ? "bg-[#0078d7]" : ""}`}>
                <div className="flex items-center">
                  <span className="flex w-[19px] shrink-0 justify-center">
                    {i === 17 && (
                      <button aria-label="展开显示样式" className="flex size-[13px] items-center justify-center border border-[#c0c0c0]">
                        <svg width="7" height="7" viewBox="0 0 7 7"><path d="M3.500 0v7M0 3.500h7" stroke="#000" /></svg>
                      </button>
                    )}
                  </span>
                  {r.name}
                </div>
              </td>
              <td className={`${cell} pl-[2px] ${active ? "bg-[#d9eaf8]" : ""}`}>{r.value}</td>
              <td className={cell}>
                {r.check && (
                  <input type="checkbox" aria-label={`附加 ${r.name}`} className="mx-auto block size-[13px] appearance-none border border-[#333] bg-white" />
                )}
              </td>
            </tr>
          );
        })}
      </tbody>
    </table>
  );
}

function PropertyPanel() {
  return (
    <section className={`ml-1 flex min-w-0 grow flex-col bg-white ${song}`}>
      <div className="flex h-5 shrink-0">
        <button className="w-[63px] shrink-0 border-r border-[#d9d9d9] text-center">属性编辑</button>
        <span className="grow border-b border-[#d9d9d9]" />
      </div>
      <div className="mt-1 mr-[5px] mb-1 ml-1 min-h-0 grow border border-[#a0a0a0] pt-px pl-px">
        <div className="relative w-fit">
          <PropertyTable />
          <div className="pointer-events-none absolute top-[113px] -left-[8px] h-[33px] w-[352px] border-3 border-[#f00000]" />
        </div>
      </div>
    </section>
  );
}

function StatusBar() {
  const box = "flex h-5 items-center border border-[#d0d0d0] bg-linear-to-b from-white to-[#f0f0f0] px-px whitespace-nowrap";
  return (
    <footer className={`flex h-[22px] shrink-0 items-center gap-[2px] bg-[#f0f0f0] ${song}`}>
      <div className={`${box} w-[148px]`} />
      <div className={`${box} w-[78px]`}>层高:4.5m</div>
      <div className={`${box} w-[98px]`}>底标高:-0.03m</div>
      <div className={`${box} w-[48px]`}>0</div>
      <div className={`${box} grow`}>指边支座负筋的标注长度尺寸线位置</div>
      <div className={`${box} w-[70px]`}>465.8 FPS</div>
    </footer>
  );
}

const apps: { name: string; line?: boolean; active?: boolean; art: React.ReactNode }[] = [
  {
    name: "花瓣",
    art: (
      <g fill="#e6e8ea">
        <path d="M10.500 11V3.500C10 0 2 .500 2 5c0 4 4 4.500 8.500 4.500z" />
        <path d="M11.500 10.500H19c3-.5 3-9-2-9-4 0-5.500 4-5.500 9z" />
        <path d="M10.500 11.500H3c-3 1-3 9 2 9 4 0 5.500-4 5.500-9z" />
        <path d="M11.500 11.500V19c.5 3.500 9 3.500 9-1.500 0-4-4.500-6-9-6z" />
        <path d="M1 9.500c3 1.500 6 1.500 9 1M12.500 1c-1.500 3-1.500 6-1 9M21 12.500c-3-1.500-6-1.500-9-1M9.500 21c1.500-3 1.500-6 1-9" fill="none" stroke="#000d12" strokeWidth="1.200" />
      </g>
    ),
  },
  {
    name: "螺旋",
    art: (
      <>
        <circle cx="9.500" cy="12" r="8" fill="none" stroke="#b9bcc0" strokeWidth="1.300" />
        <path d="M9 12c0-2 4-1.500 4 1s-7 4-8-1 5-7 9-5M5 18c5 3 12 0 12-6" fill="none" stroke="#d6d8da" strokeWidth="1.400" />
        <path d="M18-3c4 1 4 5 4 7l1 3H12l1-3c0-3 1-6 5-7zm-1.500 10h3v2h-3z" fill="#dba310" />
      </>
    ),
  },
  { name: "Edge", art: <path d="M2 10C3 4 7 1 12 1c6 0 9 4 9 9v3H8c0 6 7 6 12 3.500V21C12 24 3 22 3 14c0-3 2-6 5-7-1 1-1.500 2-1.500 3H15c0-5-8-6-13 0z" fill="#0f7bd8" /> },
  {
    name: "应用商店",
    art: (
      <>
        <path d="M1.500 6l19-2v18l-19-2z" fill="#fff" />
        <path d="M6 6c0-6 4-6 6-1 1-6 6-4 5 0" fill="none" stroke="#fff" strokeWidth="1.500" />
        <path d="M5 9l4.500-.4V13H5zM10.500 8.500L16 8v5h-5.500zM5 14h4.500v4.200L5 18zM10.500 14H16v5l-5.500-.6z" fill="#000d12" />
      </>
    ),
  },
  {
    name: "文件资源管理器",
    art: (
      <>
        <path d="M1 3h8l2 2h10v15H1z" fill="#fbd66b" />
        <path d="M1 8h20v12H1z" fill="#fee9a3" />
        <path d="M5 21v-8h13v8h-4v-4H9v4z" fill="#3aa7e8" />
      </>
    ),
  },
  {
    name: "广联达G",
    line: true,
    art: (
      <>
        <path d="M21 0c-2 4-5 4-8 5-5 2-6 9-1 11 3 1 5-1 5-3h-4l-1-4h9c1 8-4 14-11 12C1 19-1 8 5 3c5-4 11 0 16-3z" fill="#2f9bd2" />
        <path d="M1 8l14 12-4 3C5 22 0 16 1 8z" fill="#ec5f6b" />
      </>
    ),
  },
  {
    name: "360浏览器",
    line: true,
    art: (
      <>
        <circle cx="11" cy="11" r="9.500" fill="#58b82c" stroke="#e4f5da" strokeWidth="1.200" />
        <path d="M6 11h10.500c0-7-10.500-7-10.500 0 0 6 7 6.500 10 3" fill="none" stroke="#fff" strokeWidth="2.300" />
        <path d="M1 17c-2 4 1 6 4 4M16 1c3-2 6-1 4 4" fill="none" stroke="#86dc4a" strokeWidth="1.600" />
      </>
    ),
  },
  {
    name: "GGJ2013",
    line: true,
    active: true,
    art: (
      <>
        <rect x="0" y="0" width="22" height="22" rx="4.500" fill="#0b90f5" />
        <path d="M11 5v11M4.500 11.500c1 2.500 4 2 6.500.5s5.500-2 6.500-.5M7.500 14.500c0 2.500 2 3.500 3.500 2.500M14 15c-.5 1.500-2 2-3 1M9 7.500C8.500 4 13.500 4 13 7.500" fill="none" stroke="#fff" strokeWidth="1.700" strokeLinecap="round" />
      </>
    ),
  },
  {
    name: "记事",
    line: true,
    art: (
      <>
        <rect x="0" y="0" width="22" height="22" rx="2" fill="#f29a1a" />
        <path d="M3 5l11-2 4 13-12 3z" fill="#fff5dc" />
        <path d="M6 8l7-1M6.500 11l7-1M7.500 14l5-1" stroke="#b3752a" />
        <path d="M10 15L19 1l2 1.500L12 16l-2.500 1z" fill="#b5431c" />
      </>
    ),
  },
];

function Taskbar() {
  return (
    <div className="flex h-10 shrink-0 items-stretch bg-[#000d12] text-white">
      <button aria-label="开始" className="flex w-12 shrink-0 items-center justify-center">
        <svg width="16" height="16" viewBox="0 0 16 16"><path d="M0 2.300L6.800 1.300v6.200H0zM7.600 1.200L16 0v7.500H7.600zM0 8.300h6.800v6.300L0 13.600zM7.600 8.300H16V16l-8.400-1.200z" fill="#fff" /></svg>
      </button>
      <label className="flex w-[344px] shrink-0 items-center bg-[#333] pr-[13px] pl-[8px]">
        <svg width="22" height="22" viewBox="0 0 22 22" className="shrink-0"><circle cx="11" cy="11" r="9" fill="none" stroke="#fff" strokeWidth="2.600" /></svg>
        <input aria-label="搜索" placeholder="在这里输入你要搜索的内容" className="ml-[6px] min-w-0 grow bg-transparent text-[14px] leading-5 placeholder:text-[#9a9a9a]" />
        <svg width="14" height="18" viewBox="0 0 14 18"><path d="M4.500 1.500h5v9h-5zM1.500 8v5.500h11V8M7 13.500v3M4 16.500h6" fill="none" stroke="#a5a5a5" /></svg>
      </label>
      <div className="ml-[2px] flex gap-[2px]">
        {apps.map((a) => (
          <button key={a.name} aria-label={a.name} className={`flex w-12 flex-col items-center justify-between ${a.active ? "bg-[#333e42]" : ""}`}>
            <svg width="22" height="22" viewBox="0 0 22 22" className="mt-[9px] overflow-visible">{a.art}</svg>
            <span className={`h-[2px] ${a.active ? "w-12" : "w-10"} ${a.line ? "bg-[#76b9ed]" : ""}`} />
          </button>
        ))}
      </div>
      <div className="ml-auto flex items-center">
        <div className="mr-[20px] text-center leading-[17px]">13%<br />CPU使用</div>
        <button aria-label="显示隐藏的图标" className="mr-[10px]">
          <svg width="12" height="8" viewBox="0 0 12 8"><path d="M.7 7L6 1.500 11.300 7" fill="none" stroke="#fff" strokeWidth="1.200" /></svg>
        </button>
        <svg width="17" height="14" viewBox="0 0 17 14" className="mr-[10px]"><path d="M6.500 4.500h8v7H5.500V8M15.500 6.500v3" fill="none" stroke="#fff" strokeWidth="1.300" /><path d="M8 6h5v4H8z" fill="#fff" /><path d="M1.500 0v3M4.500 0v3M.5 3h5v2L3 7 .5 5zM3 7v4" fill="none" stroke="#fff" /></svg>
        <svg width="13" height="13" viewBox="0 0 13 13" className="mr-2"><path d="M1 12C1 6 6 1 12 1M4 12.500C4 8 8 4 12 4M7 12.500c0-3 2-5 5-5" fill="none" stroke="#bbb" strokeWidth="1.300" /><circle cx="11" cy="11" r="1.700" fill="#fff" /></svg>
        <span className="mr-[12px] text-[14px]">中</span>
        <span className="mr-[16px]"><SogouMark size={18} /></span>
        <div className="mr-[20px] text-center leading-[19px]">13:29<br />2017/6/14</div>
        <button aria-label="通知中心" className="relative mr-[12px] h-6 w-[26px]">
          <svg width="17" height="17" viewBox="0 0 17 17" className="mt-px ml-[2px]"><path d="M0 0h16v13H5v3l-3-3H0z" fill="#fff" /><path d="M3 4h10M3 7h10M3 10h6" stroke="#000d12" /></svg>
          <span className="absolute top-[9px] left-[9px] flex size-4 items-center justify-center rounded-full border border-[#888] bg-[#333] text-[11px] font-bold">6</span>
        </button>
        <span className="mr-[3px] h-full w-px bg-[#555e61]" />
      </div>
    </div>
  );
}

export default function App() {
  return (
    <div className="flex h-screen flex-col overflow-hidden bg-[#f0f0f0] font-['Noto_Sans','Noto_Sans_CJK_SC',sans-serif] text-[12px] leading-4 text-black">
      <TitleBar />
      <MenuBar />
      <MainToolbar />
      <main className="flex min-h-0 grow">
        <Sidebar />
        <div className="ml-[5px] flex min-w-0 grow flex-col">
          <ComponentToolbar />
          <div className="flex min-h-0 grow">
            <ComponentList />
            <PropertyPanel />
          </div>
        </div>
      </main>
      <StatusBar />
      <Taskbar />
    </div>
  );
}
